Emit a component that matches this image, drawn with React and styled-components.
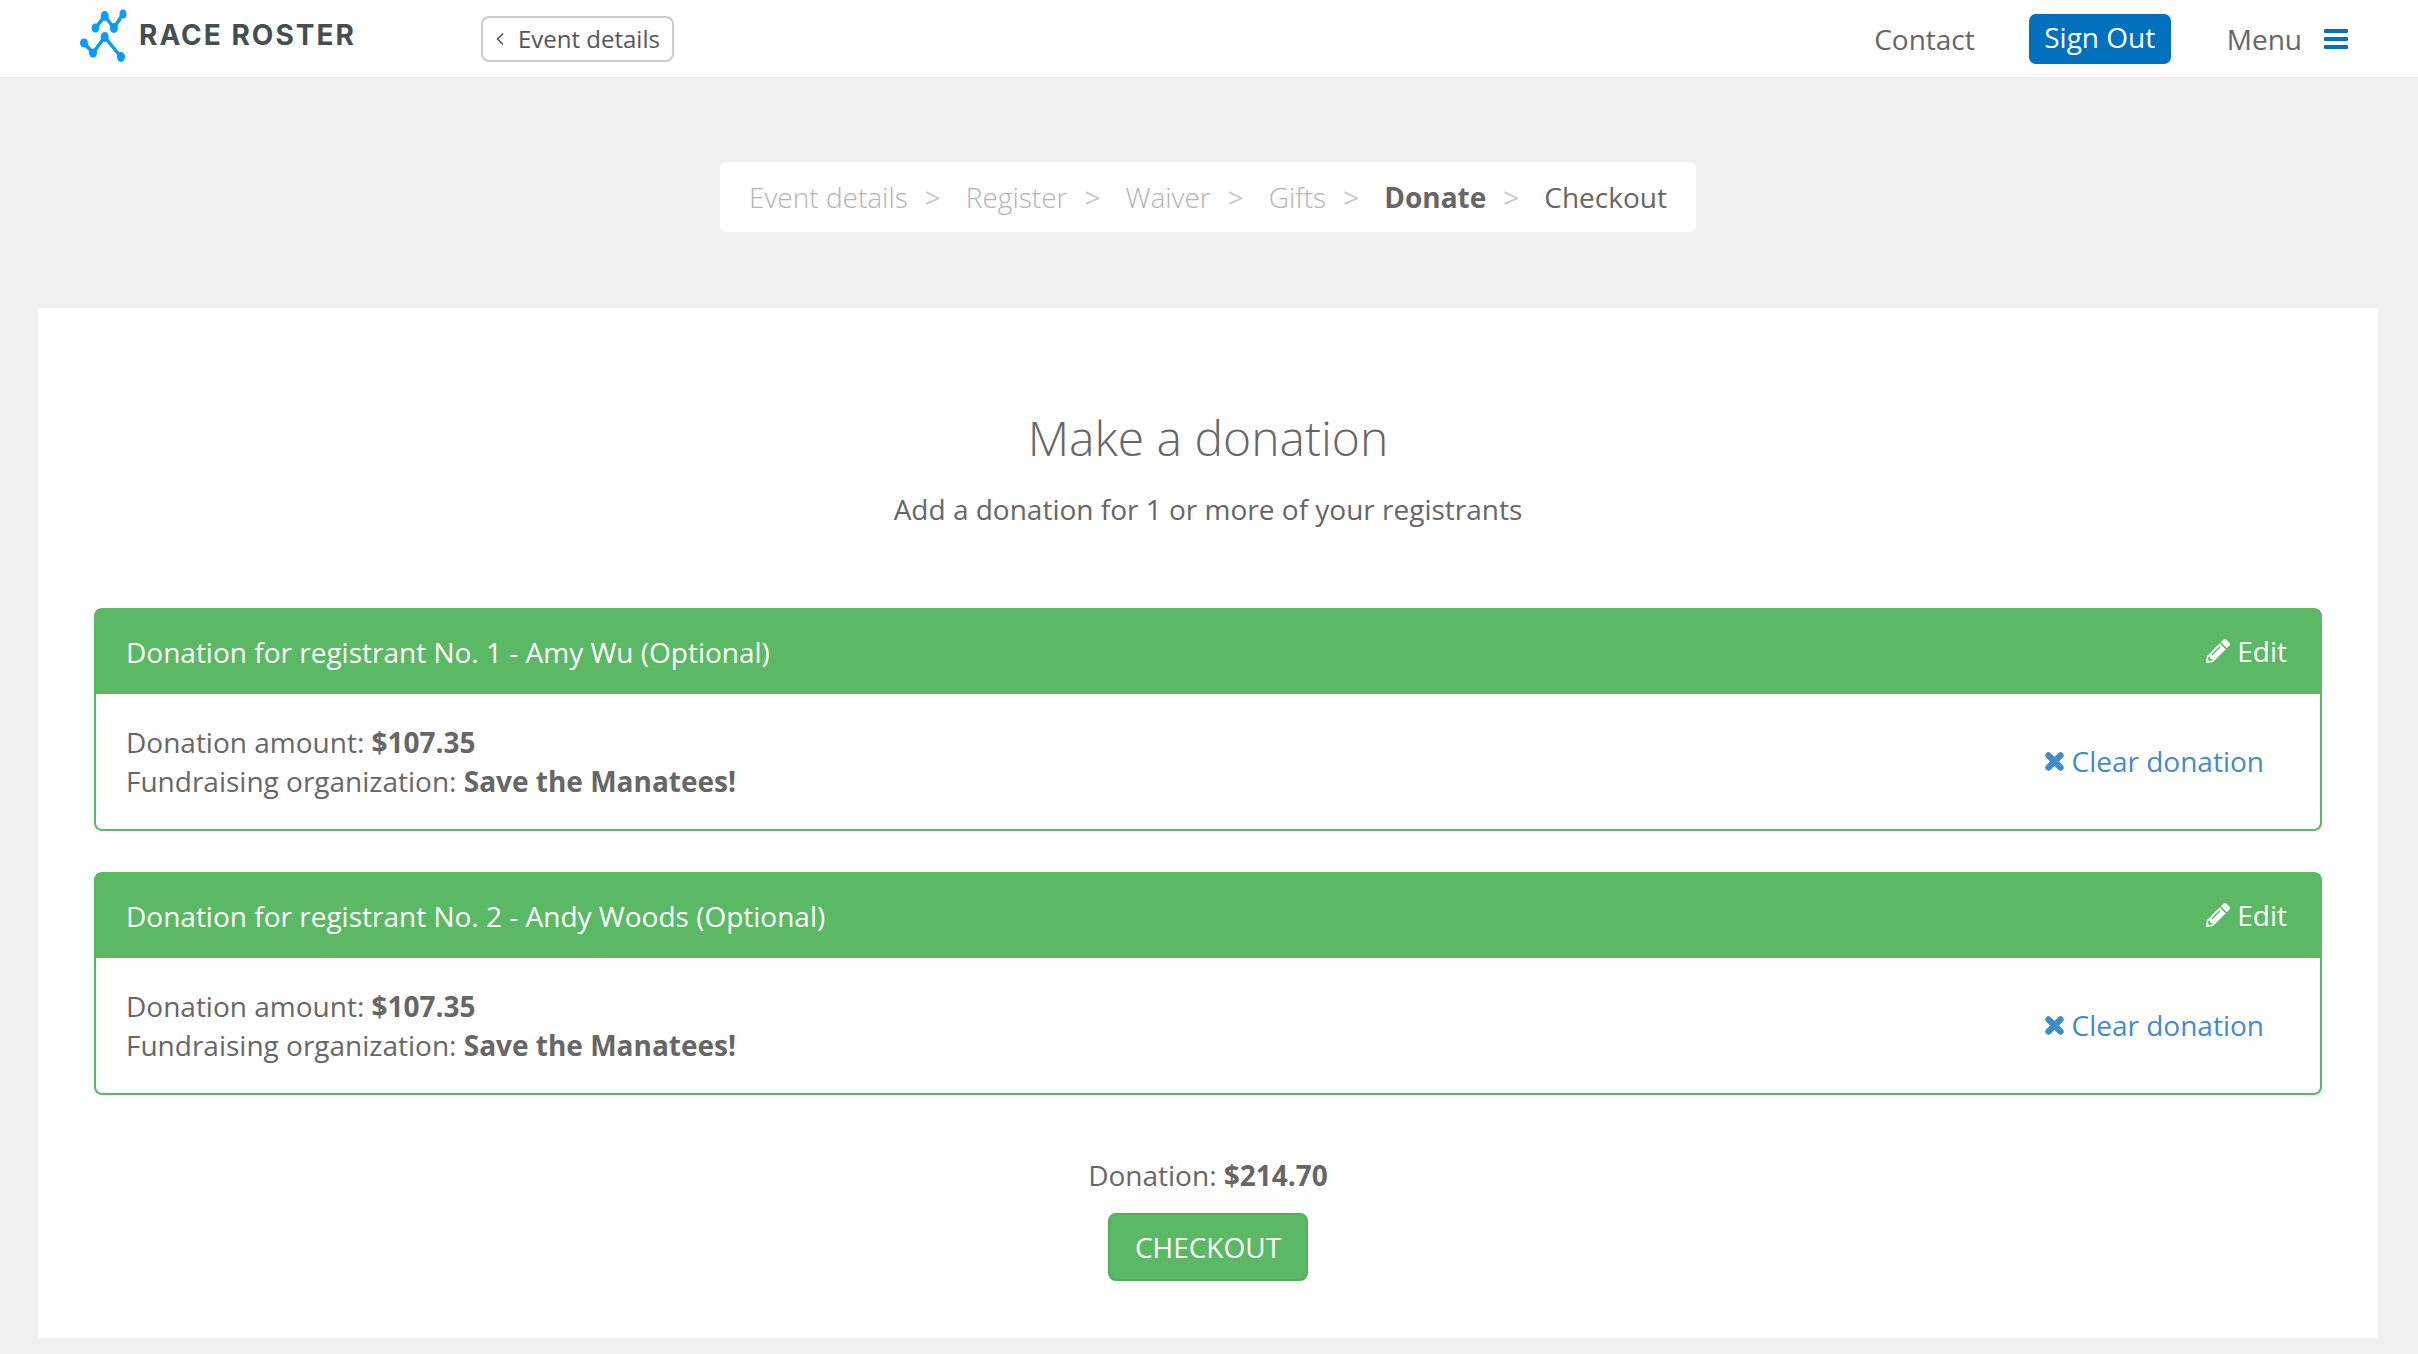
import styled, { createGlobalStyle } from 'styled-components'
import { FaPencilAlt } from 'react-icons/fa'
import { ChevronLeft } from 'lucide-react'

const GlobalStyle = createGlobalStyle`
  html, body {
    margin: 0;
    padding: 0;
    background: #f0f0f0;
    font-family: "Open Sans", "Liberation Sans", sans-serif;
    color: #666666;
  }
  * {
    box-sizing: border-box;
  }
`
const Page = styled.div`
  width: 2418px;
  height: 1354px;
  overflow: hidden;
  display: flex;
  flex-direction: column;
  align-items: flex-start;
`
const Header = styled.header`
  width: 100%;
  height: 78px;
  flex-shrink: 0;
  background: #ffffff;
  border-bottom: 1px solid #ebebeb;
  display: flex;
  align-items: center;
  padding: 0 70px 0 80px;
`
const Brand = styled.div`
  width: 401px;
  display: flex;
  align-items: center;
  gap: 11px;
`
const LogoMark = styled.svg`
  width: 48px;
  height: 54px;
  margin-top: -6px;
`
const BrandName = styled.span`
  font-family: Inter, "Liberation Sans", sans-serif;
  font-weight: 700;
  font-size: 28px;
  letter-spacing: 2px;
  white-space: nowrap;
  color: #454e50;
  margin-top: -7px;
`
const BackButton = styled.a`
  width: 193px;
  height: 46px;
  border: 2px solid #cccccc;
  border-radius: 8px;
  display: flex;
  align-items: center;
  gap: 8px;
  padding-left: 7px;
  font-size: 24px;
  color: #555555;
`
const Nav = styled.nav`
  margin-left: auto;
  display: flex;
  align-items: center;
  font-size: 28px;
  color: #666666;
`
const SignOut = styled.a`
  width: 142px;
  height: 50px;
  margin: 0 56px 0 54px;
  padding-bottom: 3px;
  border-radius: 7px;
  background: #0271bd;
  color: #ffffff;
  display: flex;
  align-items: center;
  justify-content: center;
`
const MenuBars = styled.span`
  width: 24px;
  height: 20px;
  margin-left: 22px;
  display: flex;
  flex-direction: column;
  justify-content: space-between;
  i {
    display: block;
    height: 4px;
    border-radius: 1px;
    background: #0271bd;
  }
`
const Steps = styled.ol`
  list-style: none;
  margin: 84px 0 0 720px;
  width: 976px;
  height: 70px;
  flex-shrink: 0;
  padding: 0 0 0 29px;
  background: #ffffff;
  border-radius: 6px;
  display: flex;
  align-items: center;
  font-size: 28px;
`
const Step = styled.li`
  color: ${(p) => (p.$state === 'done' ? '#b3b3b3' : '#666666')};
  font-weight: ${(p) => (p.$state === 'done' ? 300 : p.$state === 'active' ? 700 : 400)};
`
const StepArrow = styled.li`
  margin: 0 25px 0 17px;
  color: #c8c8c8;
  font-weight: 400;
`
const Card = styled.main`
  width: 2340px;
  height: 1030px;
  margin: 76px 0 0 38px;
  background: #ffffff;
  padding: 95px 56px 0;
  display: flex;
  flex-direction: column;
  align-items: center;
`
const Title = styled.h1`
  margin: 0;
  font-size: 48px;
  line-height: 70px;
  font-weight: 300;
  color: #666666;
`
const Subtitle = styled.p`
  margin: 16px 0 0;
  font-size: 28px;
  line-height: 40px;
  color: #666666;
`
const Panels = styled.div`
  width: 100%;
  margin-top: 79px;
  display: flex;
  flex-direction: column;
  gap: 41px;
`
const Panel = styled.section`
  height: 223px;
  border: 2px solid #5bb865;
  border-radius: 8px;
  display: flex;
  flex-direction: column;
`
const PanelHead = styled.div`
  height: 84px;
  flex-shrink: 0;
  background: #5bb865;
  color: #ffffff;
  font-size: 28px;
  display: flex;
  align-items: center;
  justify-content: space-between;
  padding: 0 33px 0 30px;
`
const EditLink = styled.a`
  display: flex;
  align-items: center;
  gap: 7px;
  margin-top: -3px;
  svg {
    width: 24px;
    height: 24px;
  }
`
const PanelBody = styled.div`
  flex: 1;
  display: flex;
  align-items: center;
  justify-content: space-between;
  padding: 0 56px 0 30px;
  font-size: 28px;
  line-height: 39px;
`
const ClearLink = styled.a`
  display: flex;
  align-items: center;
  gap: 8px;
  color: #428bca;
`
const Total = styled.p`
  margin: 60px 0 0;
  font-size: 28px;
  line-height: 40px;
`
const CheckoutButton = styled.button`
  width: 200px;
  height: 68px;
  margin-top: 18px;
  background: #5bb865;
  border: 2px solid #52b05c;
  border-radius: 8px;
  color: #ffffff;
  font-family: inherit;
  font-size: 28px;
`

const Logo = () => (
  <LogoMark viewBox="0 0 48 54">
    <g fill="none" stroke="#0a9cf5" strokeWidth="3.5" strokeLinecap="round">
      <polyline points="15.5,19 24.7,7 33.9,19 43,5" />
      <polyline points="4,34 13,44 24.7,28 41,48" />
    </g>
    <g fill="#0a9cf5">
      <ellipse cx="15.5" cy="19" rx="4" ry="4.5" />
      <ellipse cx="24.7" cy="7" rx="4" ry="5" />
      <ellipse cx="33.9" cy="19" rx="4" ry="5" />
      <ellipse cx="43" cy="5" rx="3.5" ry="4.5" />
      <ellipse cx="4" cy="34" rx="4" ry="4.5" />
      <ellipse cx="13" cy="44" rx="4" ry="4.5" />
      <ellipse cx="24.7" cy="28" rx="4" ry="5" />
      <ellipse cx="41" cy="48" rx="4" ry="5" />
    </g>
  </LogoMark>
)

const ClearIcon = () => (
  <svg width="19" height="19" viewBox="0 0 19 19">
    <path d="M3.5 3.5 L15.5 15.5 M15.5 3.5 L3.5 15.5" stroke="#428bca" strokeWidth="6.4" strokeLinecap="round" />
  </svg>
)

const stepItems = [
  { label: 'Event details', state: 'done' },
  { label: 'Register', state: 'done' },
  { label: 'Waiver', state: 'done' },
  { label: 'Gifts', state: 'done' },
  { label: 'Donate', state: 'active' },
  { label: 'Checkout', state: 'next' },
]

const donations = [
  { id: 1, name: 'Amy Wu' },
  { id: 2, name: 'Andy Woods' },
]

export default function App() {
  return (
    <Page>
      <GlobalStyle />
      <Header>
        <Brand>
          <Logo />
          <BrandName>RACE ROSTER</BrandName>
        </Brand>
        <BackButton>
          <ChevronLeft size={20} strokeWidth={2} />
          Event details
        </BackButton>
        <Nav>
          <span>Contact</span>
          <SignOut>Sign Out</SignOut>
          <span>Menu</span>
          <MenuBars>
            <i />
            <i />
            <i />
          </MenuBars>
        </Nav>
      </Header>
      <Steps>
        {stepItems.flatMap((item, i) => {
          const step = (
            <Step key={item.label} $state={item.state}>
              {item.label}
            </Step>
          )
          if (i === stepItems.length - 1) return [step]
          return [step, <StepArrow key={item.label + '-arrow'}>&gt;</StepArrow>]
        })}
      </Steps>
      <Card>
        <Title>Make a donation</Title>
        <Subtitle>Add a donation for 1 or more of your registrants</Subtitle>
        <Panels>
          {donations.map((d) => (
            <Panel key={d.id}>
              <PanelHead>
                <span>
                  Donation for registrant No. {d.id} - {d.name} (Optional)
                </span>
                <EditLink>
                  <FaPencilAlt />
                  Edit
                </EditLink>
              </PanelHead>
              <PanelBody>
                <div>
                  Donation amount: <b>$107.35</b>
                  <br />
                  Fundraising organization: <b>Save the Manatees!</b>
                </div>
                <ClearLink>
                  <ClearIcon />
                  Clear donation
                </ClearLink>
              </PanelBody>
            </Panel>
          ))}
        </Panels>
        <Total>
          Donation: <b>$214.70</b>
        </Total>
        <CheckoutButton>CHECKOUT</CheckoutButton>
      </Card>
    </Page>
  )
}
